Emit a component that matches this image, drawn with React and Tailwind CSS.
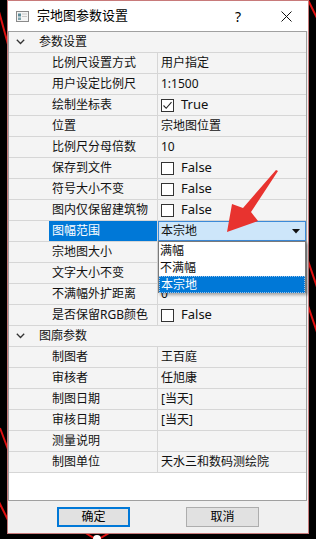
import React from 'react';

const groups = [
  {
    title: '参数设置',
    rows: [
      { label: '比例尺设置方式', value: '用户指定' },
      { label: '用户设定比例尺', value: '1:1500' },
      { label: '绘制坐标表', check: true, value: 'True' },
      { label: '位置', value: '宗地图位置' },
      { label: '比例尺分母倍数', value: '10' },
      { label: '保存到文件', check: false, value: 'False' },
      { label: '符号大小不变', check: false, value: 'False' },
      { label: '图内仅保留建筑物', check: false, value: 'False' },
      { label: '图幅范围', combo: true, value: '本宗地', selected: true },
      { label: '宗地图大小', value: '' },
      { label: '文字大小不变', value: '' },
      { label: '不满幅外扩距离', value: '0' },
      { label: '是否保留RGB颜色', check: false, value: 'False' },
    ],
  },
  {
    title: '图廓参数',
    rows: [
      { label: '制图者', value: '王百庭' },
      { label: '审核者', value: '任旭康' },
      { label: '制图日期', value: '[当天]' },
      { label: '审核日期', value: '[当天]' },
      { label: '测量说明', value: '' },
      { label: '制图单位', value: '天水三和数码测绘院' },
    ],
  },
];

const CheckBox = ({ checked }) => (
  <span className="w-[13px] h-[13px] border border-[#333] bg-white flex items-center justify-center shrink-0">
    {checked && (
      <svg width="11" height="11" viewBox="0 0 11 11">
        <polyline points="1.5,5.5 4.2,8.3 9.5,2.2" fill="none" stroke="#222" strokeWidth="1.1" />
      </svg>
    )}
  </span>
);

const Chevron = () => (
  <svg width="9" height="6" viewBox="0 0 9 6" className="shrink-0">
    <polyline points="0.8,0.8 4.5,4.5 8.2,0.8" fill="none" stroke="#333" strokeWidth="1.3" />
  </svg>
);

const PropRow = ({ row }) => (
  <div className="h-[21px] flex border-b border-[#d6d6d6] bg-[#f4f4f4]">
    <div className="w-[40px] shrink-0" />
    <div
      className={`w-[109px] shrink-0 border-r border-[#d6d6d6] pl-[3px] flex items-center whitespace-nowrap ${
        row.selected ? 'bg-[#0078d7] text-white' : 'text-[#111]'
      }`}
    >
      {row.label}
    </div>
    <div className="flex-1 flex items-center whitespace-nowrap">
      {row.combo ? (
        <div className="h-full w-full bg-[#cde6fa] border border-[#3c8ad8] flex items-center justify-between pl-[2px] pr-[5px]">
          <span>{row.value}</span>
          <svg width="8" height="5" viewBox="0 0 8 5">
            <polygon points="0,0 8,0 4,4.5" fill="#111" />
          </svg>
        </div>
      ) : row.check !== undefined ? (
        <div className="flex items-center gap-[7px] pl-[3px]">
          <CheckBox checked={row.check} />
          <span className="text-[13px]">{row.value}</span>
        </div>
      ) : (
        <span className="pl-[3px]">{row.value}</span>
      )}
    </div>
  </div>
);

export default function App() {
  return (
    <div className="relative w-[316px] h-[539px] bg-black overflow-hidden font-['Noto_Sans','Noto_Sans_CJK_SC',sans-serif] text-[12px] text-[#111]">
      {/* desktop drawing behind the dialog */}
      <svg className="absolute inset-0" width="316" height="539" viewBox="0 0 316 539">
        <g stroke="#e01010" strokeWidth="2" fill="none">
          <line x1="-2" y1="8" x2="9" y2="48" />
          <line x1="0" y1="428" x2="9" y2="452" />
          <line x1="-2" y1="500" x2="9" y2="522" />
          <line x1="306" y1="255" x2="318" y2="290" />
          <line x1="306" y1="300" x2="318" y2="335" />
          <line x1="306" y1="-4" x2="318" y2="20" />
          <line x1="84" y1="532" x2="97" y2="540" />
          <line x1="111" y1="532" x2="97" y2="540" />
        </g>
        <circle cx="97" cy="539" r="4" fill="#fff" />
      </svg>

      <div className="relative ml-[7px] w-[302px] h-[534px] border border-[#c87a7a] bg-[#f0f0f0] flex flex-col">
        {/* title bar */}
        <div className="h-[30px] bg-white flex items-center shrink-0">
          <svg width="13" height="11" viewBox="0 0 13 11" className="ml-[8px]">
            <rect x="0.5" y="0.5" width="12" height="10" fill="#f4f4f4" stroke="#8a8a8a" />
            <rect x="2" y="2.5" width="3" height="3" fill="#5b8a98" />
            <rect x="2" y="6.5" width="3" height="2.5" fill="#7fa4ae" />
            <rect x="6" y="2.5" width="5" height="1" fill="#c8c8c8" />
            <rect x="6" y="5" width="5" height="1" fill="#c8c8c8" />
          </svg>
          <span className="ml-[8px] text-[13px] text-black">宗地图参数设置</span>
          <span className="ml-auto mr-[40px] text-[14px] text-black">?</span>
          <svg width="11" height="11" viewBox="0 0 11 11" className="mr-[16px]">
            <line x1="0.5" y1="0.5" x2="10.5" y2="10.5" stroke="#111" strokeWidth="1" />
            <line x1="10.5" y1="0.5" x2="0.5" y2="10.5" stroke="#111" strokeWidth="1" />
          </svg>
        </div>

        {/* property tree */}
        <div className="relative w-[299px] h-[470px] border border-[#a0a0a0] bg-white shrink-0">
          {groups.map((g) => (
            <div key={g.title}>
              <div className="h-[21px] flex items-center border-b border-[#d6d6d6] bg-[#f4f4f4]">
                <span className="ml-[7px]">
                  <Chevron />
                </span>
                <span className="ml-[14px]">{g.title}</span>
              </div>
              {g.rows.map((r) => (
                <PropRow key={r.label} row={r} />
              ))}
            </div>
          ))}

          {/* open combo list */}
          <div className="absolute left-[149px] top-[209px] w-[148px] h-[52px] border border-[#7a7a7a] bg-white shadow-[2px_2px_3px_rgba(0,0,0,0.35)] flex flex-col">
            <div className="h-[17px] flex items-center pl-[1px]">满幅</div>
            <div className="h-[17px] flex items-center pl-[1px]">不满幅</div>
            <div className="h-[17px] flex items-center pl-[1px] bg-[#0078d7] text-white border border-dotted border-[#9cc3e8]">本宗地</div>
          </div>
        </div>

        {/* buttons */}
        <div className="flex-1 flex items-center pl-[49px] gap-[56px]">
          <button className="w-[73px] h-[20px] bg-[#e1e1e1] border-2 border-[#0078d7] text-[12px] text-black leading-none">确定</button>
          <button className="w-[73px] h-[20px] bg-[#e1e1e1] border border-[#adadad] text-[12px] text-black leading-none">取消</button>
        </div>
      </div>

      {/* red annotation arrow */}
      <svg className="absolute inset-0 pointer-events-none" width="316" height="539" viewBox="0 0 316 539">
        <polygon
          points="278,171 251,212 258,221 227,232 232,204 243,208 276,170"
          fill="#e8332f"
        />
      </svg>
    </div>
  );
}
